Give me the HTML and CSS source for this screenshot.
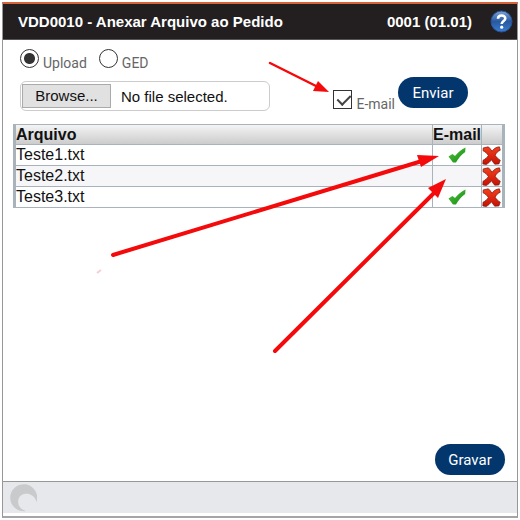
FILE: index.html
```html
<!DOCTYPE html>
<html lang="pt-BR">

<head>
  <meta charset="UTF-8">
  <meta name="viewport" content="width=device-width, initial-scale=1.0">
  <title>VDD0010 - Anexar Arquivo ao Pedido</title>
  <link rel="stylesheet" href="styles.css">
</head>

<body>

  <!-- Icons used more than once -->
  <svg class="defs" aria-hidden="true">
    <defs>
      <linearGradient id="green" x1="0" y1="0" x2="1" y2="1">
        <stop offset="0" stop-color="#49c536" />
        <stop offset="1" stop-color="#1d8a1a" />
      </linearGradient>
      <linearGradient id="red" x1="0" y1="0" x2="0" y2="1">
        <stop offset="0" stop-color="#f5401c" />
        <stop offset="1" stop-color="#c41205" />
      </linearGradient>
      <symbol id="check" viewBox="0 0 18 16">
        <path d="M0.500 9.500 L4.500 7 L7 9 C10 5.500 13 2.500 17.500 0.500 L17.200 5 C13 8 10.500 11 8 15.500 L5 15.500 Z" fill="url(#green)" />
      </symbol>
      <symbol id="cross" viewBox="0 0 18 18">
        <path d="M1.200 1.800 L6 0.800 C7.500 2 8.500 3.500 9.500 5 C11 2.800 13 1 16.500 0.800 L17.300 4 C15 5 13.500 6.500 12.500 8.800 C13.800 11 15.300 12.200 17.300 13.500 L16 17 L12 17.200 C10.800 16 10 14.500 9 13 C7.500 15 6 16.500 4 17.500 L0.800 17 L1 13.500 C3 12.500 5 11 6 9 C4.800 7 3.200 5.500 1 4.500 Z" fill="url(#red)" stroke="#7d1a0e" stroke-width="0.700" />
      </symbol>
    </defs>
  </svg>

  <form class="window">
    <header class="titlebar">
      <h1>VDD0010 - Anexar Arquivo ao Pedido</h1>
      <span class="version">0001 (01.01)</span>
      <button type="button" class="help" aria-label="Ajuda">
        <svg width="23" height="23" viewBox="0 0 23 23">
          <defs>
            <linearGradient id="blue" x1="0" y1="0" x2="0" y2="1">
              <stop offset="0" stop-color="#7ea3d8" />
              <stop offset="0.5" stop-color="#28599f" />
              <stop offset="1" stop-color="#3a7cd0" />
            </linearGradient>
          </defs>
          <circle cx="11.500" cy="11.500" r="10.500" fill="url(#blue)" stroke="#27539a" />
          <path d="M8 8.800 C8 4.500 15.300 4.500 15.300 8.500 C15.300 11 11.700 11.200 11.700 14" fill="none" stroke="#fff" stroke-width="2.600" />
          <circle cx="11.700" cy="17.200" r="1.600" fill="#fff" />
        </svg>
      </button>
    </header>

    <main class="content">
      <div class="source">
        <label><input type="radio" name="origem" value="upload" checked> Upload</label>
        <label><input type="radio" name="origem" value="ged"> GED</label>
      </div>

      <div class="upload">
        <label class="file">
          <input type="file" name="arquivo">
          <span class="browse">Browse...</span>
          <span>No file selected.</span>
        </label>
        <label class="email"><input type="checkbox" name="email" checked> E-mail</label>
        <button type="button" class="btn">Enviar</button>
      </div>

      <table class="files">
        <thead>
          <tr>
            <th>Arquivo</th>
            <th class="col-email">E-mail</th>
            <th class="col-delete"></th>
          </tr>
        </thead>
        <tbody>
          <tr>
            <td>Teste1.txt</td>
            <td class="col-email"><svg width="18" height="16"><use href="#check" /></svg></td>
            <td class="col-delete"><button type="button" aria-label="Excluir Teste1.txt"><svg width="19" height="19"><use href="#cross" /></svg></button></td>
          </tr>
          <tr>
            <td>Teste2.txt</td>
            <td class="col-email"></td>
            <td class="col-delete"><button type="button" aria-label="Excluir Teste2.txt"><svg width="19" height="19"><use href="#cross" /></svg></button></td>
          </tr>
          <tr>
            <td>Teste3.txt</td>
            <td class="col-email"><svg width="18" height="16"><use href="#check" /></svg></td>
            <td class="col-delete"><button type="button" aria-label="Excluir Teste3.txt"><svg width="19" height="19"><use href="#cross" /></svg></button></td>
          </tr>
        </tbody>
      </table>

      <div class="actions">
        <button type="submit" class="btn">Gravar</button>
      </div>
    </main>

    <footer class="statusbar">
      <svg width="28" height="28" viewBox="0 0 28 28" aria-hidden="true">
        <path d="M17 27 A13.500 13.500 0 1 1 27.500 18 C25 7.500 12 7.500 9.500 15 C8 20.500 11 25.500 17 27 Z" fill="#c9cacb" />
      </svg>
    </footer>
  </form>

  <!-- Arrows pointing at the e-mail option and its column -->
  <svg class="arrows" width="520" height="520" viewBox="0 0 520 520" aria-hidden="true">
    <g stroke="#f40a0a" stroke-linecap="round">
      <path d="M270 63 L318 87" stroke-width="2.500" />
      <path d="M113 255 L422 161" stroke-width="4" />
      <path d="M275 351 L434 193" stroke-width="4" />
    </g>
    <g fill="#f40a0a">
      <path d="M329 92 L313 91 L318 81 Z" />
      <path d="M439 156 L421 167 L417 155 Z" />
      <path d="M446 179 L438 198 L428 188 Z" />
    </g>
    <path d="M97 273 L101 270" stroke="#f8cdd3" stroke-width="2" />
  </svg>

</body>

</html>
```
FILE: styles.css
```css
* {
  box-sizing: border-box;
}

body {
  font-family: "Liberation Sans", Arial, sans-serif;
  font-size: 16px;
  background-color: #fff;
  color: #111;
  margin: 0;
  padding: 2px;
}

.defs {
  position: absolute;
  width: 0;
  height: 0;
}

.window {
  display: flex;
  flex-direction: column;
  min-height: calc(100vh - 4px);
  border: 1px solid #979797;
  border-top: 2px solid #d8623c;
  border-bottom: 2px solid #a5a5a5;
}

/* Title bar */
.titlebar {
  display: flex;
  align-items: center;
  height: 36px;
  padding: 0 4px 0 15px;
  background-color: #231f20;
  border-bottom: 1px solid #555;
  color: #fff;
  font-weight: bold;
  font-size: 15px;
}

.titlebar h1 {
  flex: 1;
  margin: 0;
  font-size: 15px;
}

.help {
  width: 23px;
  height: 23px;
  margin-left: 18px;
  padding: 0;
  border: none;
  background: none;
  cursor: pointer;
}

.help svg,
.files svg {
  display: block;
}

/* Form */
.content {
  flex: 1;
  display: flex;
  flex-direction: column;
  padding: 8px 12px 6px 10px;
}

.source,
.upload {
  display: flex;
  padding-left: 7px;
}

.source {
  gap: 12px;
}

.source label,
.email {
  display: flex;
  align-items: flex-end;
  gap: 4px;
  font-family: Roboto, sans-serif;
  font-size: 14px;
  line-height: 18px;
  color: #666;
}

.source label {
  height: 24px;
}

input[type="radio"],
input[type="checkbox"] {
  appearance: none;
  flex: none;
  width: 19px;
  height: 19px;
  margin: 0 0 4px;
  border: 1px solid #333;
  background-color: #fff;
}

input[type="radio"] {
  border-radius: 50%;
}

input[type="radio"]:checked {
  background: radial-gradient(circle, #333 0 5px, #fff 6px);
}

input[type="checkbox"] {
  position: relative;
}

input[type="checkbox"]:checked::after {
  content: "";
  position: absolute;
  left: 6px;
  top: 1px;
  width: 6px;
  height: 11px;
  border: solid #444;
  border-width: 0 2px 2px 0;
  transform: rotate(45deg);
}

.upload {
  align-items: flex-start;
  margin-top: 5px;
}

.file {
  position: relative;
  display: flex;
  align-items: center;
  gap: 10px;
  width: 250px;
  height: 30px;
  margin-top: 4px;
  padding: 1px;
  border: 1px solid #ccc;
  border-radius: 6px;
  font-size: 15px;
}

.file input {
  position: absolute;
  inset: 0;
  width: 100%;
  opacity: 0;
}

.browse {
  width: 89px;
  line-height: 22px;
  border: 1px solid #aaa;
  background-color: #e1e1e1;
  text-align: center;
}

.email {
  height: 36px;
  margin-left: auto;
}

.btn {
  width: 70px;
  height: 31px;
  padding: 0;
  border: none;
  border-radius: 16px;
  background-color: #03366d;
  color: #fff;
  font-family: Roboto, sans-serif;
  font-size: 15px;
  cursor: pointer;
}

.upload .btn {
  margin: 0 37px 0 3px;
}

/* File list */
.files {
  width: 100%;
  margin-top: 11px;
  border-collapse: separate;
  border-spacing: 0;
  border: solid #a9b3bb;
  border-width: 1px 3px 0;
  table-layout: fixed;
}

.files th,
.files td {
  height: 21px;
  padding: 0;
  border-bottom: 1px solid #a9b3bb;
  line-height: 18px;
  text-align: left;
}

.files th {
  height: 20px;
  background: linear-gradient(#f4f4f4, #ccc);
}

.files tbody tr:nth-child(even) {
  background-color: #f6f6f8;
}

.files .col-email {
  width: 49px;
  border-left: 1px solid #a9b3bb;
  text-align: center;
}

.files .col-email svg {
  margin: 0 auto;
}

.files .col-delete {
  width: 21px;
  border-left: 1px solid #a9b3bb;
}

.col-delete button {
  display: block;
  padding: 0;
  border: none;
  background: none;
  cursor: pointer;
}

.actions {
  display: flex;
  justify-content: flex-end;
  margin-top: auto;
}

/* Status bar */
.statusbar {
  display: flex;
  align-items: center;
  height: 35px;
  padding-left: 6px;
  border-top: 1px solid #979797;
  border-bottom: 3px solid #fff;
  background-color: #e7e8ec;
}

.arrows {
  position: absolute;
  top: 0;
  left: 0;
  pointer-events: none;
}
```
